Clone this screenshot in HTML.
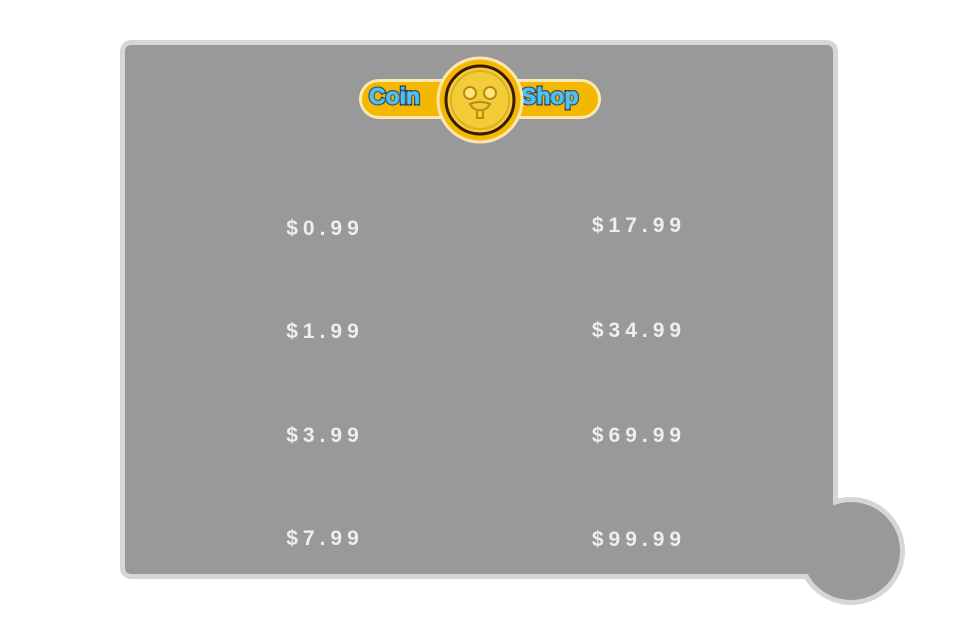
<!DOCTYPE html>
<html><head><meta charset="utf-8">
<style>
html,body{margin:0;padding:0;background:#fff;width:960px;height:640px;overflow:hidden;position:relative;font-family:"Liberation Sans",sans-serif}
.panel{position:absolute;left:120px;top:40px;width:708px;height:529px;background:#999;border:5px solid #d6d6d6;border-radius:11px}
.circb{position:absolute;left:797px;top:497px;width:108px;height:108px;border-radius:50%;background:#d6d6d6}
.circ{position:absolute;left:802px;top:502px;width:98px;height:98px;border-radius:50%;background:#999}
.price{position:absolute;color:#eee;font-weight:bold;font-size:21px;letter-spacing:5px;transform:translateX(-50%);white-space:nowrap}
.banner{position:absolute;left:359px;top:79px;width:236px;height:34px;border:3px solid #fbe7b0;border-radius:22px;background:#f5b800}
.word{position:absolute;top:83px;font-weight:bold;font-size:23px;color:#40c8f8;-webkit-text-stroke:3px #0a2a55;paint-order:stroke fill;text-shadow:0 0 2px #fff}
</style></head><body>
<div class="circb"></div>
<div class="panel"></div>
<div class="circ"></div>
<div class="banner"></div>
<div class="word" style="left:369px">Coin</div>
<div class="word" style="left:521px">Shop</div>
<svg style="position:absolute;left:436px;top:56px" width="88" height="88" viewBox="0 0 88 88">
<circle cx="44" cy="44" r="42" fill="#f5b800" stroke="#fbe7b0" stroke-width="3"/>
<circle cx="44" cy="44" r="34" fill="#f3cc3a" stroke="#3a1a00" stroke-width="3"/>
<circle cx="44" cy="44" r="29" fill="none" stroke="#e0b020" stroke-width="2"/>
<circle cx="34" cy="37" r="6" fill="#ffe77a" stroke="#b88a10" stroke-width="2"/>
<circle cx="54" cy="37" r="6" fill="#ffe77a" stroke="#b88a10" stroke-width="2"/>
<path d="M34 48 Q44 44 54 48 Q50 55 44 54 Q38 55 34 48Z" fill="none" stroke="#b88a10" stroke-width="2"/>
<path d="M41 55 L41 62 L47 62 L47 55" fill="none" stroke="#b88a10" stroke-width="2"/>
</svg>
<div class="price" style="left:325px;top:217px">$0.99</div>
<div class="price" style="left:639px;top:214px">$17.99</div>
<div class="price" style="left:325px;top:320px">$1.99</div>
<div class="price" style="left:639px;top:319px">$34.99</div>
<div class="price" style="left:325px;top:424px">$3.99</div>
<div class="price" style="left:639px;top:424px">$69.99</div>
<div class="price" style="left:325px;top:527px">$7.99</div>
<div class="price" style="left:639px;top:528px">$99.99</div>
</body></html>
